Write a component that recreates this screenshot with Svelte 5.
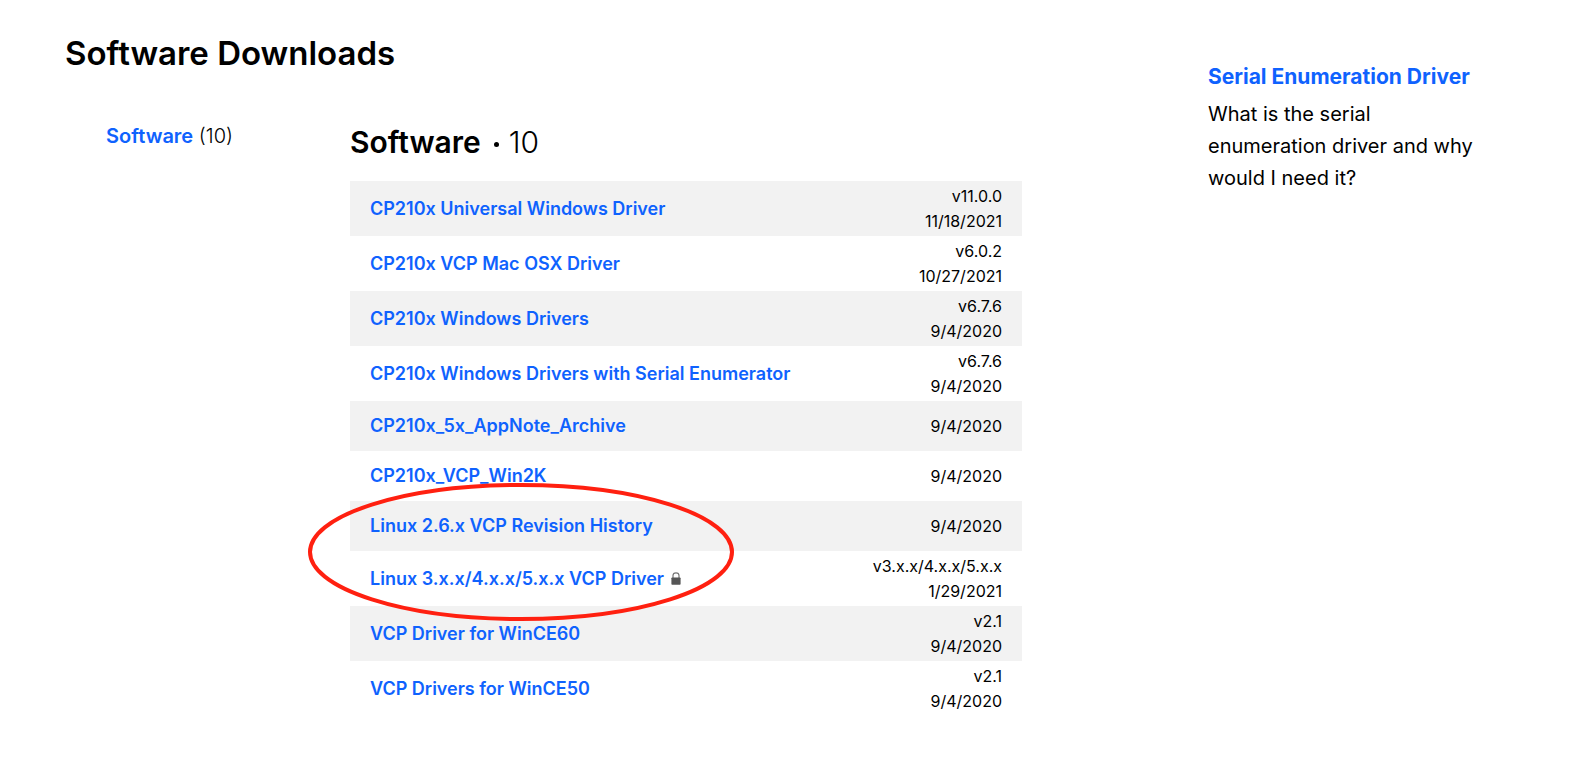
<script>
    const downloads = [
        { name: 'CP210x Universal Windows Driver', version: 'v11.0.0', date: '11/18/2021' },
        { name: 'CP210x VCP Mac OSX Driver', version: 'v6.0.2', date: '10/27/2021' },
        { name: 'CP210x Windows Drivers', version: 'v6.7.6', date: '9/4/2020' },
        { name: 'CP210x Windows Drivers with Serial Enumerator', version: 'v6.7.6', date: '9/4/2020' },
        { name: 'CP210x_5x_AppNote_Archive', date: '9/4/2020' },
        { name: 'CP210x_VCP_Win2K', date: '9/4/2020' },
        { name: 'Linux 2.6.x VCP Revision History', date: '9/4/2020' },
        { name: 'Linux 3.x.x/4.x.x/5.x.x VCP Driver', version: 'v3.x.x/4.x.x/5.x.x', date: '1/29/2021', locked: true },
        { name: 'VCP Driver for WinCE60', version: 'v2.1', date: '9/4/2020' },
        { name: 'VCP Drivers for WinCE50', version: 'v2.1', date: '9/4/2020' }
    ];
</script>

<div class="page">
    <main>
        <h1>Software Downloads</h1>
        <div class="content">
            <nav>
                <a href="#software">Software</a> <span class="light">({downloads.length})</span>
            </nav>
            <section id="software">
                <h2>Software <span class="dot"></span><span class="light">{downloads.length}</span></h2>
                <div class="list">
                    <table>
                        <tbody>
                            {#each downloads as item}
                                <tr>
                                    <td class="name">
                                        <a href="#software">{item.name}</a>
                                        {#if item.locked}
                                            <svg class="lock" viewBox="0 0 10 13" role="img" aria-label="Locked">
                                                <path d="M2 6V3.6a3 2.8 0 0 1 6 0V6" fill="none" stroke="#777" stroke-width="1.2" />
                                                <rect x="0.4" y="5.5" width="9.2" height="7.3" rx="0.8" fill="#555" />
                                            </svg>
                                        {/if}
                                    </td>
                                    <td class="info">
                                        {#if item.version}<div>{item.version}</div>{/if}
                                        <div>{item.date}</div>
                                    </td>
                                </tr>
                            {/each}
                        </tbody>
                    </table>
                    <!-- marker around the Linux downloads -->
                    <svg class="marker" viewBox="0 0 428 140" aria-hidden="true">
                        <ellipse cx="214" cy="70" rx="211" ry="67" fill="none" stroke="#ff2010" stroke-width="4" />
                    </svg>
                </div>
            </section>
        </div>
    </main>
    <aside>
        <h3><a href="#serial-enumeration">Serial Enumeration Driver</a></h3>
        <p>What is the serial enumeration driver and why would I need it?</p>
    </aside>
</div>

<style>
    :global(body) {
        margin: 0;
        background: #fff;
    }

    .page {
        display: flex;
        justify-content: space-between;
        gap: 40px;
        padding: 32px 107px 48px 65px;
        font-family: Inter, "Liberation Sans", sans-serif;
        font-size: 20px;
        color: #000;
    }

    main {
        flex: 0 1 957px;
    }

    a {
        color: #0f62fe;
        font-weight: 600;
        text-decoration: none;
    }

    a:hover {
        text-decoration: underline;
    }

    h1 {
        margin: 0 0 46px;
        font-size: 33px;
        line-height: 42px;
        font-weight: 600;
    }

    .content {
        display: flex;
    }

    nav {
        flex: 0 0 244px;
        padding-left: 41px;
        line-height: 32px;
    }

    .light {
        font-weight: 300;
    }

    section {
        flex: 1;
    }

    h2 {
        display: flex;
        align-items: center;
        margin: 0 0 16px;
        font-size: 30px;
        line-height: 45px;
        font-weight: 600;
    }

    .dot {
        width: 5px;
        height: 5px;
        margin: 4px 10px 0 13px;
        border-radius: 50%;
        background: #000;
    }

    .list {
        position: relative;
    }

    table {
        width: 100%;
        border-collapse: collapse;
    }

    tr {
        height: 50px;
    }

    tr:nth-child(odd) {
        background: #f2f2f2;
    }

    .name {
        padding: 2px 20px 3px;
        font-size: 18px;
        line-height: 25px;
    }

    .info {
        padding: 3px 20px 2px;
        font-size: 16px;
        line-height: 25px;
        text-align: right;
    }

    .lock {
        width: 10px;
        height: 13px;
        margin-left: 2px;
    }

    .marker {
        position: absolute;
        top: 301px;
        left: -43px;
        width: 428px;
        height: 140px;
        pointer-events: none;
    }

    aside {
        flex: 0 0 272px;
        padding-top: 29px;
        line-height: 32px;
    }

    h3 {
        margin: 0 0 5px;
        font-size: 21px;
    }

    h3 a {
        font-weight: 700;
    }

    p {
        margin: 0;
    }
</style>
